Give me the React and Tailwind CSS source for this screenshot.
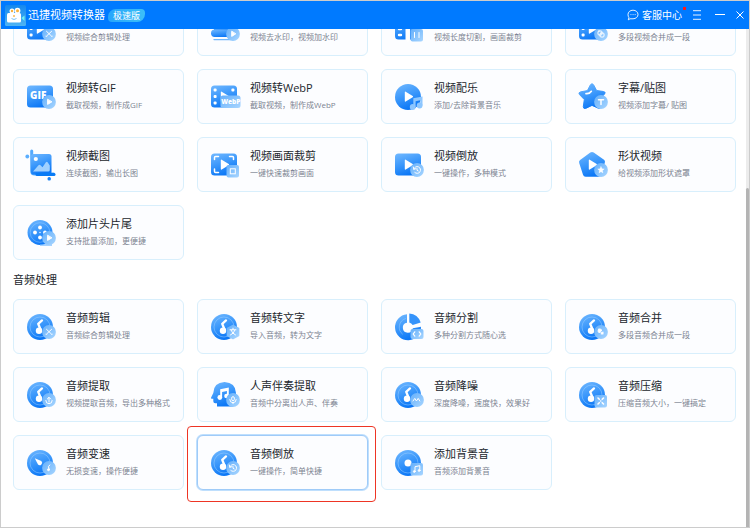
import { clsx } from "clsx"

const videoTools = [
    { icon: "cut", desc: "视频综合剪辑处理" },
    { icon: "watermark", desc: "视频去水印，视频加水印" },
    { icon: "split", desc: "视频长度切割，画面裁剪" },
    { icon: "merge", desc: "多段视频合并成一段" },
    { icon: "gif", title: "视频转GIF", desc: "截取视频，制作成GIF" },
    { icon: "webp", title: "视频转WebP", desc: "截取视频，制作成WebP" },
    { icon: "soundtrack", title: "视频配乐", desc: "添加/去除背景音乐" },
    { icon: "subtitle", title: "字幕/贴图", desc: "视频添加字幕/ 贴图" },
    { icon: "snapshot", title: "视频截图", desc: "连续截图，输出长图" },
    { icon: "crop", title: "视频画面裁剪", desc: "一键快速裁剪画面" },
    { icon: "reverse", title: "视频倒放", desc: "一键操作，多种模式" },
    { icon: "shape", title: "形状视频", desc: "给视频添加形状遮罩" },
    { icon: "intro", title: "添加片头片尾", desc: "支持批量添加，更便捷" },
]

const audioTools = [
    { icon: "audioCut", title: "音频剪辑", desc: "音频综合剪辑处理" },
    { icon: "audioText", title: "音频转文字", desc: "导入音频，转为文字" },
    { icon: "audioSplit", title: "音频分割", desc: "多种分割方式随心选" },
    { icon: "audioMerge", title: "音频合并", desc: "多段音频合并成一段" },
    { icon: "audioExtract", title: "音频提取", desc: "视频提取音频，导出多种格式" },
    { icon: "vocal", title: "人声伴奏提取", desc: "音频中分离出人声、伴奏" },
    { icon: "denoise", title: "音频降噪", desc: "深度降噪，速度快，效果好" },
    { icon: "compress", title: "音频压缩", desc: "压缩音频大小，一键搞定" },
    { icon: "speed", title: "音频变速", desc: "无损变速，操作便捷" },
    { icon: "audioReverse", title: "音频倒放", desc: "一键操作，简单快捷", active: true },
    { icon: "bgm", title: "添加背景音", desc: "音频添加背景音" },
]

function Gradients() {
    return (
        <svg className="absolute size-0" aria-hidden="true">
            <defs>
                <linearGradient id="body" x1="0" y1="0" x2="0.4" y2="1">
                    <stop offset="0" stopColor="#72b9ff" />
                    <stop offset="0.55" stopColor="#3a97fb" />
                    <stop offset="1" stopColor="#0d78f6" />
                </linearGradient>
                <linearGradient id="badge" x1="0" y1="0" x2="1" y2="1">
                    <stop offset="0" stopColor="#64affb" />
                    <stop offset="1" stopColor="#a9d6ff" />
                </linearGradient>
                <linearGradient id="logo" x1="0" y1="0" x2="0" y2="1">
                    <stop offset="0" stopColor="#1488ee" />
                    <stop offset="1" stopColor="#4fb4f4" />
                </linearGradient>
            </defs>
        </svg>
    )
}

function Round({ children }) {
    return (
        <>
            <circle cx="24" cy="21" r="6.9" fill="url(#badge)" />
            <g fill="none" stroke="#fff" strokeWidth="1" strokeLinecap="round">{children}</g>
        </>
    )
}

function Square({ children }) {
    return (
        <>
            <rect x="17.5" y="16" width="12.5" height="12.5" rx="2" fill="url(#badge)" />
            <g fill="none" stroke="#fff" strokeWidth="1" strokeLinecap="round">{children}</g>
        </>
    )
}

function Film({ holes }) {
    return (
        <>
            <rect x="2" y="4.5" width="26" height="22" rx="3.5" fill="url(#body)" />
            {holes && (
                <g fill="#fff">
                    <rect x="4.6" y="7.6" width="3" height="3" rx="1" />
                    <rect x="4.6" y="14" width="3" height="3" rx="1" />
                    <rect x="4.6" y="20.4" width="3" height="3" rx="1" />
                    <rect x="22.4" y="7.6" width="3" height="3" rx="1" />
                </g>
            )}
        </>
    )
}

function Play() {
    return <path d="M11.8 11.2v8.8q0 1 .9.5l7-4.3q.8-.6 0-1.2l-7-4.3q-.9-.5-.9.5z" fill="#fff" />
}

function Disc({ plain }) {
    return (
        <>
            <circle cx="15" cy="16" r="13" fill="url(#body)" />
            {!plain && <circle cx="15" cy="16" r="10" fill="none" stroke="#9fd0ff" strokeOpacity="0.6" strokeWidth="0.8" />}
        </>
    )
}

function MusicDisc() {
    return (
        <>
            <Disc />
            <circle cx="14" cy="19.8" r="3.2" fill="#fff" />
            <path d="M16 19.8 13.2 12.8l3.8-3.4" fill="none" stroke="#fff" strokeWidth="2.3" strokeLinecap="round" strokeLinejoin="round" />
        </>
    )
}

function Rewind() {
    return <path d="M20.8 20.2a3.4 3.4 0 1 1 1 3.3M20.3 18l.5 2.3 2.1-.6M24 19.6v1.7l1.2.6" />
}

function Scissors() {
    return <path d="M21.5 18.3l4.2 4M26.6 18.3l-4.3 4M21 23.2h.8M26.4 23.2h.8" />
}

const icons = {
    cut: <><Film holes /><Play /><Round><Scissors /></Round></>,
    watermark: (
        <>
            <rect x="5" y="5" width="21" height="15" rx="3" fill="url(#body)" />
            <rect x="2" y="16.500" width="25" height="7.500" rx="3.700" fill="url(#body)" />
            <path d="M5 26.600h16" stroke="#70b7fd" strokeWidth="1.400" strokeLinecap="round" />
            <Round><path d="M22.700 18.600v4.800l3.800-2.400z" fill="#fff" /></Round>
        </>
    ),
    split: (
        <>
            <path d="M5.500 4.500h7v22h-7Q2 26.500 2 23V8q0-3.500 3.500-3.500zM17 4.500h7.500Q28 4.500 28 8v15q0 3.500-3.500 3.500H17z" fill="url(#body)" />
            <path d="M6 10h2M6 16h2M6 22h2M14.700 3.500v24" stroke="#fff" strokeWidth="2.400" strokeLinecap="round" />
            <Square><path d="M21.500 19.500v5M26 19.500v5" /></Square>
        </>
    ),
    merge: (
        <>
            <Film holes />
            <Play />
            <Round>
                <rect x="21" y="18" width="4" height="4" rx="1" />
                <rect x="23" y="20" width="4" height="4" rx="1" />
            </Round>
        </>
    ),
    gif: (
        <>
            <Film />
            <text x="5" y="17.500" fontSize="10" fontWeight="800" fill="#fff" fontFamily="Open Sans, sans-serif">GIF</text>
            <Round><path d="M22.600 18.600v4.800l4-2.400z" fill="#fff" strokeLinejoin="round" /></Round>
        </>
    ),
    webp: (
        <>
            <Film holes />
            <Play />
            <rect x="11.500" y="14.500" width="20" height="12.500" rx="2.500" fill="url(#badge)" />
            <text x="12.300" y="23.200" fontSize="6.500" fontWeight="800" fill="#fff" fontFamily="Open Sans, sans-serif">WebP</text>
        </>
    ),
    soundtrack: (
        <>
            <Disc plain />
            <Play />
            <g fill="#8cc6ff">
                <circle cx="19.700" cy="26" r="2.900" />
                <circle cx="26.600" cy="24.500" r="2.900" />
                <path d="M20.300 17.200 29.500 15.500v9h-2.200v-5.300l-4.700 1v5.800h-2.300z" />
            </g>
        </>
    ),
    subtitle: (
        <>
            <path d="M13.400 3.800q1.600-2.300 3.200 0l3 5.700 6.900 1q2.800.6 1 2.600l-5 5.200 1.200 7q.1 2.700-2.400 1.900L15 24.400l-6.300 3q-2.400.7-2.400-1.800l1-7-4.800-5q-1.600-2 .9-2.700l7-1.300z" fill="url(#body)" stroke="url(#body)" strokeWidth="1" strokeLinejoin="round" />
            <path d="M9 12.600q3.600.4 5.300-2.300" fill="none" stroke="#fff" strokeWidth="1.700" strokeLinecap="round" />
            <Round><path d="M21.500 18.800h5M24 18.800v4.700" strokeWidth="1.500" /></Round>
        </>
    ),
    snapshot: (
        <>
            <circle cx="2.300" cy="7.500" r="1.900" fill="#5aaeff" />
            <path d="M6.700 2v20q0 3 3 3h19" fill="none" stroke="#55aafd" strokeWidth="3" strokeLinecap="round" />
            <rect x="6" y="5" width="20.500" height="20.500" rx="2.500" fill="url(#body)" />
            <circle cx="10.800" cy="10" r="2.100" fill="#fff" />
            <path d="M8 22.500l5.500-6.300q1-.8 2 .1l2 1.900 3.400-5q1-1 1.900.2l2 3v4.500q0 1.600-1.600 1.600z" fill="#9fd0ff" />
            <path d="M12 25.500h17" stroke="#087bf5" strokeWidth="3" strokeLinecap="round" />
            <rect x="22.500" y="28" width="3.400" height="3.600" rx="1.500" fill="#1681f7" />
        </>
    ),
    crop: (
        <>
            <Film />
            <Play />
            <path d="M5.500 10.500v-2q0-1 1-1h3M20.500 7.500h3q1 0 1 1v2M5.500 20v2.500q0 1 1 1h3" fill="none" stroke="#fff" strokeWidth="1.500" strokeLinecap="round" />
            <Square><rect x="21.300" y="19.800" width="5" height="5" /></Square>
        </>
    ),
    reverse: <><Film /><Play /><Round><Rewind /></Round></>,
    shape: (
        <>
            <path d="M13.300 3.500q1.700-1.200 3.400 0l10.300 7.300q1.500 1 .8 3l-3.800 12q-.7 1.900-2.700 1.900H8.600q-2 0-2.600-1.900L2.200 14q-.6-2 .9-3z" fill="url(#body)" />
            <Play />
            <Round><path d="M24 17.600l1 2.100 2.300.3-1.700 1.600.4 2.300-2-1.100-2 1.100.4-2.300-1.700-1.600 2.300-.3z" fill="#fff" strokeWidth="0.300" /></Round>
        </>
    ),
    intro: (
        <>
            <circle cx="15" cy="15.500" r="12.500" fill="url(#body)" />
            <path d="M15 28h12" stroke="#6eb6fd" strokeWidth="1.200" />
            <circle cx="15" cy="15.500" r="9.800" fill="none" stroke="#9fd0ff" strokeOpacity="0.550" strokeWidth="0.800" />
            <g fill="#fff">
                <circle cx="15" cy="10.500" r="1.900" />
                <circle cx="10" cy="15.500" r="1.900" />
                <circle cx="20" cy="15.500" r="1.900" />
                <circle cx="15" cy="20.500" r="1.900" />
                <circle cx="15" cy="15.500" r="0.700" />
            </g>
            <Round><path d="M22.600 18.600v4.800l4-2.400z" fill="#fff" strokeLinejoin="round" /></Round>
        </>
    ),
    audioCut: <><MusicDisc /><Round><Scissors /></Round></>,
    audioText: (
        <>
            <MusicDisc />
            <path d="M24 14.500l5.600 3v7l-5.600 3-5.600-3v-7z" fill="url(#badge)" stroke="url(#badge)" strokeWidth="1.500" strokeLinejoin="round" />
            <path d="M21 18.800h6M24 17.200v1.500M22 19q1 3.500 4.500 5M26 19q-1 3.500-4.500 5" fill="none" stroke="#fff" strokeWidth="1" strokeLinecap="round" />
        </>
    ),
    audioSplit: (
        <>
            <path d="M14 3.300v8.400a5 5 0 1 0 5.800 5.500l8.200-1.500A13 13 0 1 1 14 3.300z" fill="url(#body)" />
            <path d="M16.300 2.500q8.500.5 11.400 9l-8 2.500q-1.200-2-3.400-2.600z" fill="#3493fb" />
            <path d="M12.800 7.500a9 9 0 0 0-3 15.800" fill="none" stroke="#9fd0ff" strokeOpacity="0.600" strokeWidth="0.800" />
            <rect x="17.500" y="18" width="13" height="10" rx="2" fill="url(#badge)" />
            <path d="M21.800 20.800l-1.600 2.200 1.600 2.200M26.200 20.800l1.600 2.200-1.600 2.200" fill="none" stroke="#fff" strokeWidth="1.200" strokeLinecap="round" />
        </>
    ),
    audioMerge: (
        <>
            <MusicDisc />
            <Round>
                <rect x="21.200" y="18.200" width="3.200" height="3.200" rx="0.800" fill="#fff" />
                <rect x="23.600" y="20.600" width="3.200" height="3.200" rx="0.800" fill="#fff" stroke="#8cc4fe" strokeWidth="0.500" />
            </Round>
        </>
    ),
    audioExtract: (
        <>
            <MusicDisc />
            <Round><path d="M24 23v-4.500M22.300 20l1.700-1.700 1.700 1.700M20.800 21.500a3.200 3.200 0 0 0 6.400 0" /></Round>
        </>
    ),
    vocal: (
        <>
            <path d="M8 27.500v-3.200H6.300q-2 0-2-2v-2.500H2.600q-1-.3-.5-1.300l2.200-4.500Q4.600 3.500 15.500 3q11 .5 11.500 11 0 5-3 8v5.500z" fill="url(#body)" />
            <g fill="#fff">
                <circle cx="10.800" cy="18.500" r="2.400" />
                <circle cx="17.500" cy="17" r="2.300" />
                <path d="M11.200 10.300 19.800 8.500V17h-1.900v-5l-4.800 1v5.500h-1.900z" />
            </g>
            <Round><path d="M22.700 19.500v-.5a1.300 1.300 0 0 1 2.600 0v1.500a1.300 1.300 0 0 1-2.600 0zM20.800 20.500a3.200 3.200 0 0 0 6.400 0M24 23.700v1" /></Round>
        </>
    ),
    denoise: <><MusicDisc /><Round><path d="M20 22l1.800-2.600 1.600 2.600 1.800-2.600 1.600 2.600" strokeLinejoin="round" /></Round></>,
    compress: (
        <>
            <MusicDisc />
            <Square><path d="M21 19l1.300 1.300M26.500 19l-1.300 1.300M21 25l1.300-1.300M26.500 25l-1.300-1.300M23.700 22h.1" strokeWidth="1.600" /></Square>
        </>
    ),
    speed: (
        <>
            <Disc />
            <path d="M9.800 11.300l6.500 2.700a2.400 2.400 0 1 1-3.300 3.500z" fill="#fff" />
            <Round><path d="M24.300 22.500l-.9-2.800 1.400-1.700" /><circle cx="23.500" cy="22.700" r="1" fill="#fff" /></Round>
        </>
    ),
    audioReverse: <><MusicDisc /><Round><Rewind /></Round></>,
    bgm: (
        <>
            <Disc />
            <circle cx="15" cy="16" r="3.500" fill="#fff" />
            <Square>
                <path d="M22 24.500v-4.800l4.800-1v4.800" />
                <circle cx="21.300" cy="24.500" r="0.900" fill="#fff" />
                <circle cx="26.100" cy="23.500" r="0.900" fill="#fff" />
            </Square>
        </>
    ),
}

function ToolCard({ icon, title, desc, active }) {
    return (
        <button
            type="button"
            className={clsx(
                "relative flex h-[55px] items-center gap-[9px] rounded-md border bg-[#fcfdff] pl-[11px] text-left",
                active ? "border-[#9fcbf8] ring-1 ring-[#bfdffd]" : "border-[#d8effc]"
            )}
        >
            <svg viewBox="0 0 32 32" className="size-8 shrink-0 overflow-visible" aria-hidden="true">
                {icons[icon]}
            </svg>
            <span className="flex flex-col whitespace-nowrap">
                <span className="h-4 text-[11px] leading-4 text-[#22262c]">{title}</span>
                <span className="text-[8px] leading-[17px] text-[#7c8492]">{desc}</span>
            </span>
            {active && (
                <span className="pointer-events-none absolute -top-2.5 -right-[9px] -bottom-[13px] -left-[11px] rounded border border-[#ee3524]" />
            )}
        </button>
    )
}

function ToolGrid({ tools }) {
    return (
        <div className="grid grid-cols-4 gap-[13px]">
            {tools.map((tool) => (
                <ToolCard key={tool.icon} {...tool} />
            ))}
        </div>
    )
}

function TitleBar() {
    return (
        <header className="relative z-10 flex h-7 shrink-0 items-center bg-[#007aff] pr-1 pl-1 text-white">
            <svg viewBox="0 0 21 21" className="size-[21px]" aria-hidden="true">
                <rect width="21" height="21" rx="1.500" fill="url(#logo)" />
                <circle cx="7" cy="6" r="2.500" fill="#fff" />
                <circle cx="12.500" cy="5.700" r="2.900" fill="#fff" />
                <circle cx="7" cy="6" r="1.200" fill="#f8b23c" />
                <circle cx="12.500" cy="5.700" r="1.500" fill="#f8b23c" />
                <rect x="2" y="8" width="14" height="9.500" rx="1.500" fill="#fff" />
                <path d="M6.500 13.500q2.500 2 5 0" fill="none" stroke="#7cc4f5" strokeWidth="1" />
                <circle cx="9" cy="11" r="0.900" fill="#f8b23c" />
                <path d="M16.500 13l3-2.500v5.500z" fill="#6ff0f0" />
            </svg>
            <h1 className="ml-0.5 text-[11px] leading-4">迅捷视频转换器</h1>
            <span className="ml-[3px] rounded-tl-lg rounded-tr-sm rounded-br-lg rounded-bl-sm bg-linear-to-r from-[#27a5fb] to-[#3cc0f8] px-[5px] text-[9px] leading-[13px]">
                极速版
            </span>
            <div className="ml-auto flex items-center">
                <button type="button" className="relative flex items-center gap-[3px] text-[10px] leading-4">
                    <svg viewBox="0 0 12 12" className="size-3" fill="none" stroke="currentColor" strokeWidth="0.900" aria-hidden="true">
                        <path d="M6 1.200c2.900 0 5 1.900 5 4.300S8.900 9.800 6 9.800H3l-1.700 1 .6-2.200C1.300 7.800 1 6.700 1 5.500 1 3.100 3.100 1.200 6 1.200z" />
                        <path d="M3.500 5.600h.9M5.600 5.600h.9M7.700 5.600h.9" />
                    </svg>
                    客服中心
                    <span className="absolute top-0 -right-1 size-[3px] bg-[#ff1a1a]" />
                </button>
                <button type="button" aria-label="菜单" className="ml-2.5">
                    <svg viewBox="0 0 10 10" className="size-2.5" stroke="currentColor" strokeWidth="0.900" aria-hidden="true">
                        <path d="M1 .7h8M1 5h8M1 9.300h8" />
                    </svg>
                </button>
                <button type="button" aria-label="最小化" className="ml-[13px]">
                    <svg viewBox="0 0 10 10" className="size-2.5" stroke="currentColor" aria-hidden="true">
                        <path d="M0 4.500h10" />
                    </svg>
                </button>
                <button type="button" aria-label="关闭" className="ml-2.5">
                    <svg viewBox="0 0 10 10" className="size-2.5" stroke="currentColor" aria-hidden="true">
                        <path d="M1.500 1.500l7 7M8.500 1.500l-7 7" />
                    </svg>
                </button>
            </div>
        </header>
    )
}

export default function App() {
    return (
        <div
            lang="zh-CN"
            className="flex h-screen flex-col overflow-hidden border border-[#cccccc] bg-white font-['Open_Sans','Noto_Sans_CJK_SC',sans-serif]"
        >
            <Gradients />
            <TitleBar />
            <div className="flex min-h-0 flex-1">
                <main className="min-w-0 flex-1 overflow-hidden pr-2.5 pl-3">
                    <div className="-mt-7">
                        <ToolGrid tools={videoTools} />
                        <h2 className="mt-3 mb-[11px] text-[11px] leading-4 text-[#22262c]">音频处理</h2>
                        <ToolGrid tools={audioTools} />
                    </div>
                </main>
                <div className="flex w-[3px] flex-col bg-[#ececec]">
                    <div className="mt-auto h-[68%] rounded-t-sm bg-[#b4b4b4]" />
                </div>
            </div>
        </div>
    )
}
